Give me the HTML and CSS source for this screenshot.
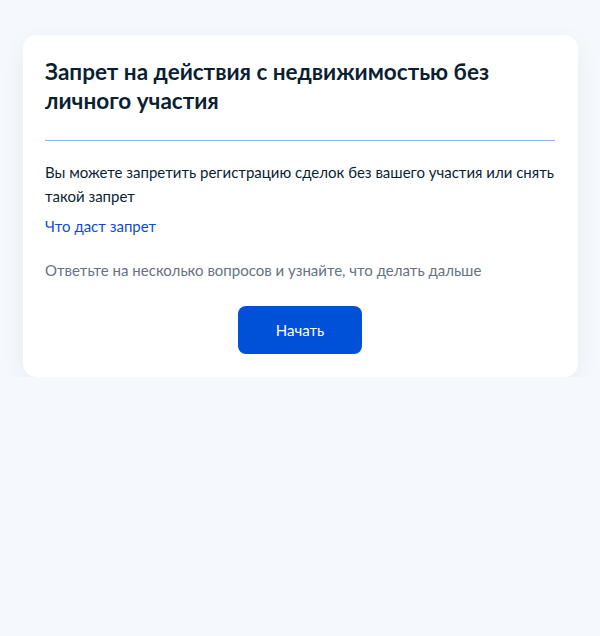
FILE: index.html
```html
<!DOCTYPE html>
<html lang="ru">
<head>
<meta charset="utf-8">
<link rel="stylesheet" href="styles.css">
</head>
<body>
<main class="page">
  <section class="card">
    <h1 class="title">Запрет на действия с недвижимостью без личного участия</h1>
    <div class="divider"></div>
    <p class="text">Вы можете запретить регистрацию сделок без вашего участия или снять такой запрет</p>
    <a class="link" href="#">Что даст запрет</a>
    <p class="hint">Ответьте на несколько вопросов и узнайте, что делать дальше</p>
    <div class="actions">
      <button class="btn" type="button">Начать</button>
    </div>
  </section>
</main>
</body>
</html>
```
FILE: styles.css
```css
html, body {
  margin: 0;
  padding: 0;
  background: #f5f8fc;
  font-family: Lato, "Noto Sans", sans-serif;
  color: #0b1f33;
}
.page {
  padding: 35px 22px 0 23px;
}
.card {
  background: #fff;
  border-radius: 14px;
  padding: 22px 23px 23px 22px;
  box-shadow: 0 8px 24px rgba(0, 60, 140, 0.06);
}
.title {
  margin: 0;
  font-size: 22.5px;
  line-height: 29px;
  font-weight: 700;
  padding-right: 40px;
}
.divider {
  height: 0;
  border-top: 1px solid #90b3ee;
  margin: 25px 0 19px;
}
.text {
  margin: 0;
  font-size: 15px;
  line-height: 24px;
}
.link {
  display: block;
  margin-top: 6px;
  font-size: 15px;
  line-height: 24px;
  color: #0d4cd3;
  text-decoration: none;
}
.hint {
  margin: 20px 0 0;
  font-size: 15px;
  line-height: 24px;
  color: #66727f;
}
.actions {
  display: flex;
  justify-content: center;
  margin-top: 24px;
}
.btn {
  width: 124px;
  height: 48px;
  border: 0;
  border-radius: 8px;
  background: #0050d8;
  color: #fff;
  font-family: Lato, "Noto Sans", sans-serif;
  font-size: 15px;
}
```
